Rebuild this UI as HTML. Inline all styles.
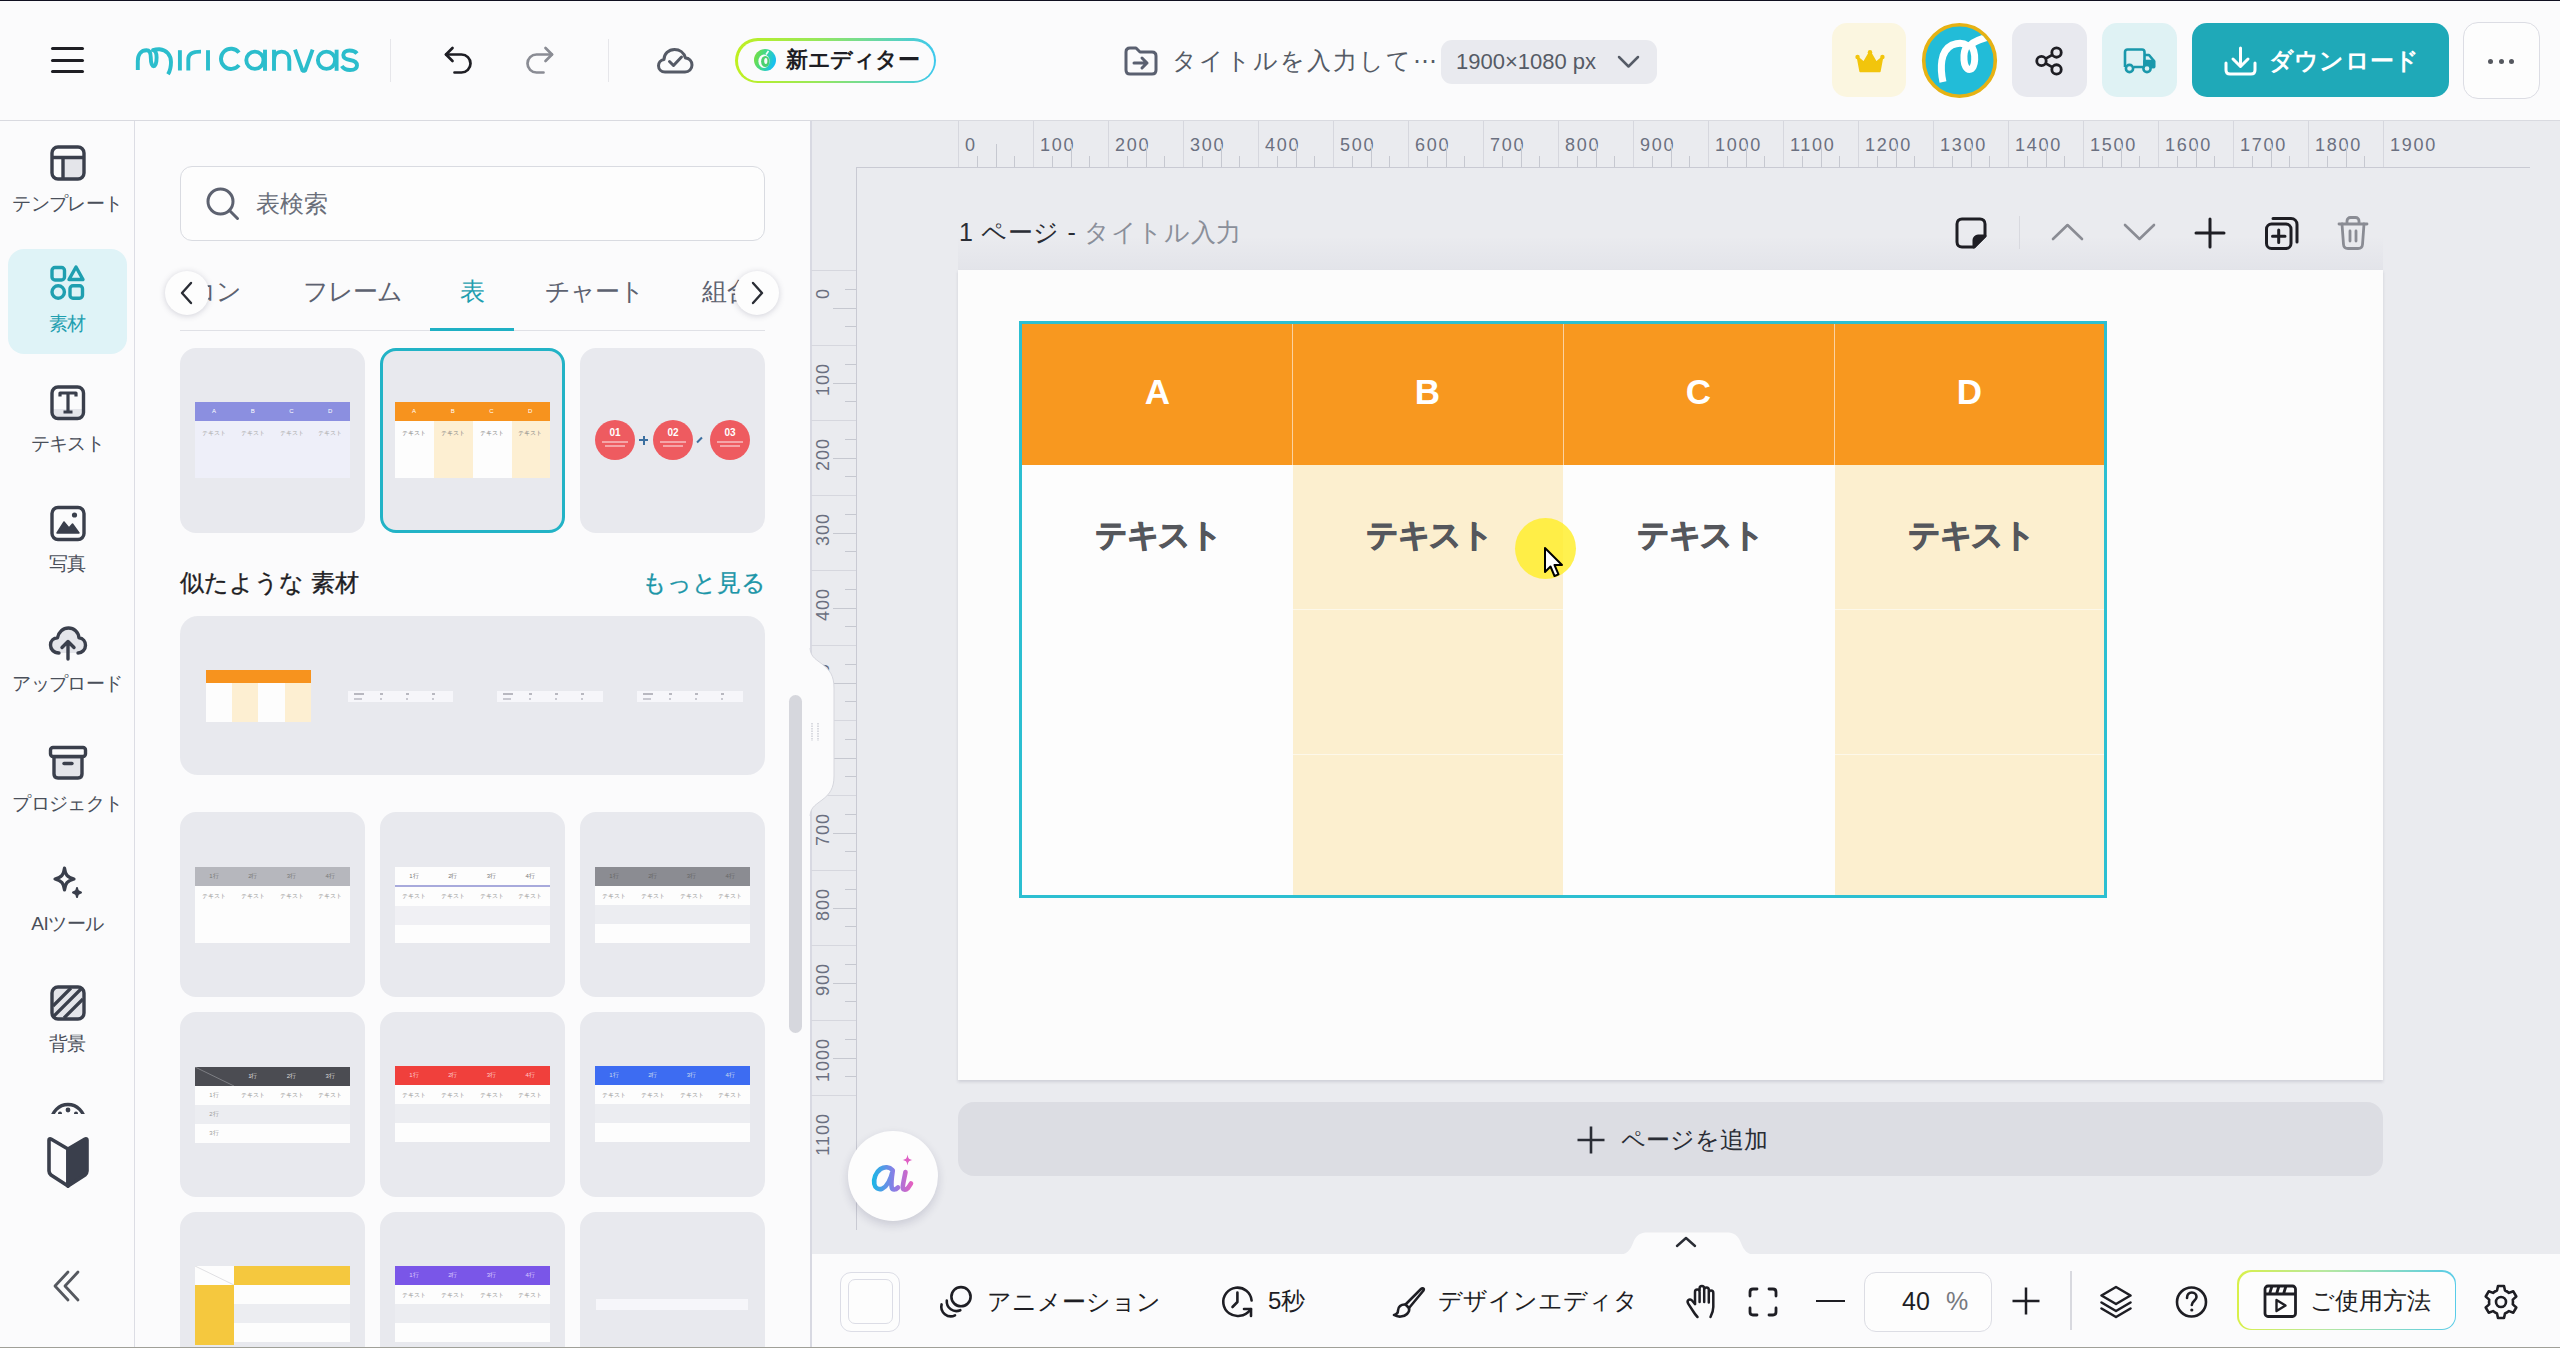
<!DOCTYPE html>
<html><head><meta charset="utf-8">
<style>
*{box-sizing:border-box;margin:0;padding:0}
html,body{width:2560px;height:1348px;overflow:hidden;background:#fbfbfc;font-family:"Liberation Sans",sans-serif;color:#222}
.a{position:absolute}
svg{display:block}
#topline{left:0;top:0;width:2560px;height:1px;background:#101020}
#botline{left:0;top:1347px;width:2560px;height:1px;background:#a0a098}
#header{left:0;top:1px;width:2560px;height:120px;background:#fbfbfc;border-bottom:1px solid #d9dae0}
#rail{left:0;top:121px;width:135px;height:1226px;background:#fbfbfc;border-right:1px solid #dcdde4}
#panel{left:135px;top:121px;width:677px;height:1226px;background:#fbfbfc;border-right:2px solid #d8d9e2}
#canvas{left:812px;top:121px;width:1748px;height:1133px;background:#eaebef}
#bottom{left:812px;top:1254px;width:1748px;height:93px;background:#fbfbfc}
.lbl{font-size:19px;color:#4a4f5a;text-align:center;width:135px;left:0;letter-spacing:-0.6px}
.card{position:absolute;width:185px;height:185px;border-radius:16px;background:#e8e9ee;overflow:hidden}
.rl{font-size:18px;line-height:18px;color:#6b7080;letter-spacing:1.7px;white-space:nowrap}
.th{top:372px;width:271px;text-align:center;font-size:35px;line-height:40px;font-weight:bold;color:#fff}
.td{top:517px;width:271px;text-align:center;font-size:32px;line-height:36px;font-weight:bold;color:#55575c;letter-spacing:-1.2px;-webkit-text-stroke:0.9px #55575c}
.tt{position:absolute;font-size:6px;line-height:7px;width:38px;text-align:center;white-space:nowrap}
</style></head><body>
<div id="topline" class="a"></div>
<div id="header" class="a"></div>

<!-- HEADER CONTENT -->
<div class="a" style="left:51px;top:47px;width:33px;height:3px;background:#1e1e24;border-radius:2px"></div>
<div class="a" style="left:51px;top:59px;width:33px;height:3px;background:#1e1e24;border-radius:2px"></div>
<div class="a" style="left:51px;top:70px;width:33px;height:3px;background:#1e1e24;border-radius:2px"></div>
<svg class="a" style="left:130px;top:40px" width="235" height="40" viewBox="130 40 235 40" fill="none" stroke="#2bbdcc" stroke-width="3.9" stroke-linecap="butt">
 <path d="M137.8 70 V61 C137.8 54 141.5 50.2 146.5 50.2 C150 50.2 150.8 53 150.8 57.5 C150.8 63 152 66.2 153.7 66.2 C155.4 66.2 156.6 63 156.6 57.5 C156.6 53 155.8 50.8 153 50.2 C155.5 49.3 157.5 49.1 159.5 49.2 C166.5 49.8 171 55 171 62 C171 67 170.2 70.8 168 74.3" stroke-linejoin="round" />
 
 <path d="M179.9 50.2 V70.5" />
 <path d="M188.3 70.5 V59 C188.3 54 193 51.6 201 51.6" />
 <path d="M208 50.2 V70.5" />
 <path d="M239 52.6 A10.1 10.1 0 1 0 239 65.1" />
 <circle cx="254.9" cy="60.25" r="8.6" />
 <path d="M265 49.7 V70.8" />
 <path d="M274 70.8 V49.7 M274 60 C274 54.5 277.5 51.6 281.6 51.6 C286 51.6 289.3 54.5 289.3 60 V70.8" />
 <path d="M295 49.7 L302.6 70.8 H305 L312.6 49.7" stroke-linejoin="bevel" />
 <circle cx="326.5" cy="60.25" r="8.6" />
 <path d="M336.6 49.7 V70.8" />
 <path d="M357 53.5 C355 51 352 50.5 349.5 50.5 C345.5 50.5 343.3 52.5 343.3 55 C343.3 58.5 347 59.5 350 60 C354 60.6 357 61.8 357 65.5 C357 68.5 354 70 350 70 C346.5 70 343.5 68.8 341.8 66" />
</svg>
<div class="a" style="left:390px;top:39px;width:1px;height:43px;background:#e6e6ea"></div>
<svg class="a" style="left:440px;top:42px" width="40" height="36" viewBox="0 0 40 36" fill="none" stroke="#1e1e24" stroke-width="2.7" stroke-linecap="round" stroke-linejoin="round">
 <path d="M12.5 6 L6 12.5 L12.5 19" /><path d="M6 12.5 H21.5 C26.5 12.5 30.5 16.5 30.5 21.5 C30.5 26.5 26.5 30.5 21.5 30.5 H14.5" />
</svg>
<svg class="a" style="left:520px;top:42px" width="40" height="36" viewBox="0 0 40 36" fill="none" stroke="#8a8c94" stroke-width="2.7" stroke-linecap="round" stroke-linejoin="round">
 <path d="M25.5 6 L32 12.5 L25.5 19" /><path d="M32 12.5 H16.5 C11.5 12.5 7.5 16.5 7.5 21.5 C7.5 26.5 11.5 30.5 16.5 30.5 H23.5" />
</svg>
<div class="a" style="left:608px;top:39px;width:1px;height:43px;background:#e6e6ea"></div>
<svg class="a" style="left:652px;top:42px" width="46" height="36" viewBox="0 0 46 36" fill="none" stroke="#555a66" stroke-width="3" stroke-linecap="round" stroke-linejoin="round">
 <path d="M13 30 H33 C37 30 40 27 40 23 C40 19 37 16 33.5 16 C32 10.5 27.5 7.5 22.5 7.5 C16.5 7.5 12 12 12 17.5 C8.5 18 6.5 20.8 6.5 23.8 C6.5 27.3 9.3 30 13 30 Z" />
 <path d="M17.5 19.5 L21.5 23.5 L29.5 15" />
</svg>
<div class="a" style="left:735px;top:38px;width:201px;height:45px;border-radius:23px;background:linear-gradient(90deg,#c0f020,#98e858 40%,#3cc8ee)"></div>
<div class="a" style="left:737.5px;top:40.5px;width:196px;height:40px;border-radius:20.5px;background:#fbfbfc"></div>
<svg class="a" style="left:753px;top:48px" width="24" height="24" viewBox="0 0 24 24">
 <defs><linearGradient id="pg" x1="0" y1="0" x2="1" y2="0.3"><stop offset="0" stop-color="#84e030"/><stop offset="0.55" stop-color="#3cd890"/><stop offset="1" stop-color="#18c0f0"/></linearGradient></defs>
 <circle cx="12" cy="12" r="11" fill="url(#pg)"/>
 <ellipse cx="11" cy="13.2" rx="5.6" ry="6.8" fill="#fbfbfc"/>
 <ellipse cx="12.3" cy="13.5" rx="4.2" ry="5.6" fill="#4cd070"/>
 <ellipse cx="12.8" cy="13" rx="1.6" ry="3" fill="#fbfbfc"/>
 <path d="M13 6.5 L15.5 3" stroke="#fbfbfc" stroke-width="1.6"/>
</svg>
<div class="a" style="left:786px;top:46px;font-size:22px;font-weight:bold;color:#1e1e24;letter-spacing:-0.4px;line-height:28px">新エディター</div>

<svg class="a" style="left:1122px;top:44px" width="38" height="34" viewBox="0 0 38 34" fill="none" stroke="#5a6070" stroke-width="3" stroke-linecap="round" stroke-linejoin="round">
 <path d="M4 8 C4 5.5 5.5 4 8 4 H14 L18 8 H30 C32.5 8 34 9.5 34 12 V26 C34 28.5 32.5 30 30 30 H8 C5.5 30 4 28.5 4 26 Z" />
 <path d="M12 19 H25 M20 14 L25 19 L20 24" />
</svg>
<div class="a" style="left:1172px;top:46px;font-size:24px;color:#555b66;letter-spacing:2px;line-height:30px;white-space:nowrap">タイトルを入力して<span style="letter-spacing:-1px">⋯</span></div>
<div class="a" style="left:1441px;top:40px;width:216px;height:44px;border-radius:11px;background:#e9eaef"></div>
<div class="a" style="left:1456px;top:48px;font-size:22px;color:#555b66;line-height:28px;white-space:nowrap">1900×1080 px</div>
<svg class="a" style="left:1614px;top:52px" width="30" height="20" viewBox="0 0 30 20" fill="none" stroke="#555b66" stroke-width="2.5" stroke-linecap="round" stroke-linejoin="round"><path d="M5 5 L14.5 14.5 L24 5"/></svg>

<div class="a" style="left:1832px;top:23px;width:74px;height:74px;border-radius:15px;background:#fbf6e0"></div>
<svg class="a" style="left:1854px;top:48px" width="32" height="27" viewBox="0 0 36 30"><path d="M4 10 L11 16 L18 4 L25 16 L32 10 L29 26 H7 Z" fill="#f2c50c" stroke="#f2c50c" stroke-width="2" stroke-linejoin="round"/><circle cx="18" cy="4.5" r="2.5" fill="#f2c50c"/><circle cx="4" cy="10" r="2.5" fill="#f2c50c"/><circle cx="32" cy="10" r="2.5" fill="#f2c50c"/></svg>
<svg class="a" style="left:1921px;top:22px" width="77" height="77" viewBox="0 0 77 77">
 <circle cx="38.5" cy="38.5" r="35.8" fill="#22bcd8" stroke="#e6b214" stroke-width="3.6"/>
 <defs><clipPath id="avc"><circle cx="38.5" cy="38.5" r="34"/></clipPath></defs><path clip-path="url(#avc)" d="M22 60 C19 46 19 29 31 23 C37 20.5 43 21 46.5 23.5 C41 30 42 47.5 48.5 47.5 C55 47.5 55.5 29.5 49.5 23 C53 19.5 60 16.5 72 14" fill="none" stroke="#fff" stroke-width="7" stroke-linecap="butt" stroke-linejoin="round"/>
</svg>
<div class="a" style="left:2012px;top:23px;width:75px;height:74px;border-radius:15px;background:#e8e9ef"></div>
<svg class="a" style="left:2033px;top:45px" width="32" height="32" viewBox="0 0 34 34" fill="none" stroke="#1e1e24" stroke-width="3"><circle cx="9" cy="17" r="5"/><circle cx="25" cy="8" r="5"/><circle cx="25" cy="26" r="5"/><path d="M13.5 14.5 L20.5 10.5 M13.5 19.5 L20.5 23.5"/></svg>
<div class="a" style="left:2102px;top:23px;width:75px;height:74px;border-radius:15px;background:#dff2f4"></div>
<svg class="a" style="left:2120px;top:46px" width="38" height="30" viewBox="0 0 38 30" fill="none" stroke="#1a98ab" stroke-width="2.6" stroke-linejoin="round">
 <path d="M5 21 V6 C5 4.5 6 3.5 7.5 3.5 H22 C23.5 3.5 24.5 4.5 24.5 6 V21 H14"/>
 <path d="M24.5 9 H29 L34 15 V21 H31"/><path d="M24.5 15 H34 V21 H24.5 Z" fill="#1a98ab"/>
 <circle cx="9.5" cy="22.5" r="3.6" fill="#dff2f4"/><circle cx="27" cy="22.5" r="3.6" fill="#dff2f4"/>
</svg>
<div class="a" style="left:2192px;top:23px;width:257px;height:74px;border-radius:15px;background:#1fa9b8"></div>
<svg class="a" style="left:2222px;top:44px" width="38" height="34" viewBox="0 0 38 34" fill="none" stroke="#fff" stroke-width="3" stroke-linecap="round" stroke-linejoin="round"><path d="M18.5 4 V22 M11 15 L18.5 22.5 L26 15"/><path d="M4 19 V26 C4 28.5 5.5 30 8 30 H29 C31.5 30 33 28.5 33 26 V19"/></svg>
<div class="a" style="left:2269px;top:46px;font-size:24px;color:#fff;font-weight:bold;letter-spacing:0.2px;line-height:30px;white-space:nowrap">ダウンロード</div>
<div class="a" style="left:2463px;top:22px;width:77px;height:77px;border-radius:15px;background:#fdfdfd;border:1px solid #dcdde4"></div>
<div class="a" style="left:2487.5px;top:58.5px;width:5px;height:5px;border-radius:3px;background:#55585f"></div>
<div class="a" style="left:2498.5px;top:58.5px;width:5px;height:5px;border-radius:3px;background:#55585f"></div>
<div class="a" style="left:2508.5px;top:58.5px;width:5px;height:5px;border-radius:3px;background:#55585f"></div>

<div id="rail" class="a"></div>
<div id="panel" class="a"></div>


<!-- PANEL CONTENT -->
<div class="a" style="left:180px;top:166px;width:585px;height:75px;border-radius:12px;border:1px solid #d9dbe1;background:#fdfdfd"></div>
<svg class="a" style="left:203px;top:184px" width="40" height="40" viewBox="0 0 40 40" fill="none" stroke="#5d6270" stroke-width="3" stroke-linecap="round"><circle cx="17.5" cy="17.5" r="12.5"/><path d="M26.5 26.5 L34.5 34.5"/></svg>
<div class="a" style="left:256px;top:190px;font-size:24px;color:#6a6f7a;line-height:28px">表検索</div>

<div class="a" style="left:200px;top:276px;width:560px;height:34px;overflow:hidden">
 <div class="a" style="left:-9px;top:0;font-size:25px;color:#5d6270;line-height:30px;white-space:nowrap;letter-spacing:-1px">コン</div>
 <div class="a" style="left:103px;top:0;font-size:25px;color:#5d6270;line-height:30px;white-space:nowrap;letter-spacing:-1px">フレーム</div>
 <div class="a" style="left:260px;top:0;font-size:25px;color:#1f9fb0;line-height:30px;white-space:nowrap">表</div>
 <div class="a" style="left:345px;top:0;font-size:25px;color:#5d6270;line-height:30px;white-space:nowrap;letter-spacing:-1px">チャート</div>
 <div class="a" style="left:502px;top:0;font-size:25px;color:#5d6270;line-height:30px;white-space:nowrap">組合せ</div>
</div>
<div class="a" style="left:180px;top:330px;width:585px;height:1px;background:#e0e1e6"></div>
<div class="a" style="left:430px;top:328px;width:84px;height:3px;background:#1fb0c4"></div>
<div class="a" style="left:165px;top:271px;width:44px;height:44px;border-radius:22px;background:#fdfdfd;box-shadow:0 1px 6px rgba(60,60,90,0.22)"></div>
<svg class="a" style="left:176px;top:280px" width="22" height="26" viewBox="0 0 22 26" fill="none" stroke="#2a2d35" stroke-width="2.4" stroke-linecap="round" stroke-linejoin="round"><path d="M15 3 L6 13 L15 23"/></svg>
<div class="a" style="left:735px;top:271px;width:44px;height:44px;border-radius:22px;background:#fdfdfd;box-shadow:0 1px 6px rgba(60,60,90,0.22)"></div>
<svg class="a" style="left:746px;top:280px" width="22" height="26" viewBox="0 0 22 26" fill="none" stroke="#2a2d35" stroke-width="2.4" stroke-linecap="round" stroke-linejoin="round"><path d="M7 3 L16 13 L7 23"/></svg>

<!-- row1 -->
<div class="card" style="left:180px;top:348px">
 <div class="a" style="z-index:2;left:0;top:0;width:185px;height:185px"><div class="tt" style="left:15.0px;top:60.0px;color:#fff">A</div>
 <div class="tt" style="left:53.8px;top:60.0px;color:#fff">B</div>
 <div class="tt" style="left:92.5px;top:60.0px;color:#fff">C</div>
 <div class="tt" style="left:131.2px;top:60.0px;color:#fff">D</div>
 <div class="tt" style="left:15.0px;top:81.5px;color:#aaa">テキスト</div>
 <div class="tt" style="left:53.8px;top:81.5px;color:#aaa">テキスト</div>
 <div class="tt" style="left:92.5px;top:81.5px;color:#aaa">テキスト</div>
 <div class="tt" style="left:131.2px;top:81.5px;color:#aaa">テキスト</div></div>
 <div class="a" style="left:15px;top:54px;width:155px;height:19px;background:#8b8fe0"></div>
 <div class="a" style="left:15px;top:73px;width:155px;height:57px;background:#eeeff9"></div>
</div>
<div class="card" style="left:380px;top:348px;border:3px solid #22b3c6">
 <div class="a" style="left:-3px;top:-3px;width:185px;height:185px;z-index:2"><div class="tt" style="left:15.0px;top:60.0px;color:#fff">A</div>
 <div class="tt" style="left:53.8px;top:60.0px;color:#fff">B</div>
 <div class="tt" style="left:92.5px;top:60.0px;color:#fff">C</div>
 <div class="tt" style="left:131.2px;top:60.0px;color:#fff">D</div>
 <div class="tt" style="left:15.0px;top:81.5px;color:#888">テキスト</div>
 <div class="tt" style="left:53.8px;top:81.5px;color:#888">テキスト</div>
 <div class="tt" style="left:92.5px;top:81.5px;color:#888">テキスト</div>
 <div class="tt" style="left:131.2px;top:81.5px;color:#888">テキスト</div></div>
 <div class="a" style="left:12px;top:51px;width:155px;height:19px;background:#f7931e"></div>
 <div class="a" style="left:12px;top:70px;width:39px;height:57px;background:#fdfdfd"></div>
 <div class="a" style="left:51px;top:70px;width:39px;height:57px;background:#fdefd2"></div>
 <div class="a" style="left:90px;top:70px;width:39px;height:57px;background:#fdfdfd"></div>
 <div class="a" style="left:129px;top:70px;width:38px;height:57px;background:#fdefd2"></div>
</div>
<div class="card" style="left:580px;top:348px">
 <div class="a" style="left:15px;top:72px;width:40px;height:40px;border-radius:20px;background:#ee5b60"></div>
 <div class="a" style="left:73px;top:72px;width:40px;height:40px;border-radius:20px;background:#ee5b60"></div>
 <div class="a" style="left:130px;top:72px;width:40px;height:40px;border-radius:20px;background:#ee5b60"></div>
 <div class="a" style="left:15px;top:79px;width:40px;text-align:center;font-size:10px;line-height:11px;color:#fff;font-weight:bold">01</div>
 <div class="a" style="left:73px;top:79px;width:40px;text-align:center;font-size:10px;line-height:11px;color:#fff;font-weight:bold">02</div>
 <div class="a" style="left:130px;top:79px;width:40px;text-align:center;font-size:10px;line-height:11px;color:#fff;font-weight:bold">03</div>
 <div class="a" style="left:22px;top:93px;width:26px;height:1.5px;background:#f5a5a8"></div>
 <div class="a" style="left:25px;top:97px;width:20px;height:1.5px;background:#f5a5a8"></div>
 <div class="a" style="left:80px;top:93px;width:26px;height:1.5px;background:#f5a5a8"></div>
 <div class="a" style="left:83px;top:97px;width:20px;height:1.5px;background:#f5a5a8"></div>
 <div class="a" style="left:137px;top:93px;width:26px;height:1.5px;background:#f5a5a8"></div>
 <div class="a" style="left:140px;top:97px;width:20px;height:1.5px;background:#f5a5a8"></div>
 <div class="a" style="left:59px;top:91px;width:9px;height:2px;background:#3b6fa0"></div>
 <div class="a" style="left:62.5px;top:87.5px;width:2px;height:9px;background:#3b6fa0"></div>
 <div class="a" style="left:116px;top:91px;width:7px;height:2px;background:#3b6fa0;transform:rotate(-45deg)"></div>
</div>

<div class="a" style="left:180px;top:570px;font-size:24px;color:#1e1e24;line-height:26px;white-space:nowrap;-webkit-text-stroke:0.35px #1e1e24">似たような 素材</div>
<div class="a" style="left:642px;top:569px;font-size:24px;color:#1d96a8;line-height:28px;white-space:nowrap;-webkit-text-stroke:0.3px #1d96a8">もっと見る</div>

<div class="a" style="left:180px;top:616px;width:585px;height:159px;border-radius:18px;background:#e8e9ee;overflow:hidden">
 <div class="a" style="left:26px;top:54px;width:105px;height:12.5px;background:#f7931e"></div>
 <div class="a" style="left:26px;top:66.5px;width:26px;height:39.5px;background:#fdfdfd"></div>
 <div class="a" style="left:52px;top:66.5px;width:26px;height:39.5px;background:#fdefd2"></div>
 <div class="a" style="left:78px;top:66.5px;width:27px;height:39.5px;background:#fdfdfd"></div>
 <div class="a" style="left:105px;top:66.5px;width:26px;height:39.5px;background:#fdefd2"></div>
 <div class="a" style="left:168px;top:75px;width:105px;height:11px;background:#f6f6fa"></div><div class="a" style="left:174px;top:77px;width:10px;height:2px;background:#b8b8c0"></div><div class="a" style="left:174px;top:82px;width:8px;height:1.5px;background:#c8c8d0"></div><div class="a" style="left:200px;top:77px;width:3px;height:2px;background:#b8b8c0"></div><div class="a" style="left:200px;top:82px;width:2px;height:1.5px;background:#c8c8d0"></div><div class="a" style="left:226px;top:77px;width:3px;height:2px;background:#b8b8c0"></div><div class="a" style="left:226px;top:82px;width:2px;height:1.5px;background:#c8c8d0"></div><div class="a" style="left:252px;top:77px;width:3px;height:2px;background:#b8b8c0"></div><div class="a" style="left:252px;top:82px;width:2px;height:1.5px;background:#c8c8d0"></div>
 <div class="a" style="left:317px;top:75px;width:106px;height:11px;background:#f6f6fa"></div><div class="a" style="left:323px;top:77px;width:10px;height:2px;background:#b8b8c0"></div><div class="a" style="left:323px;top:82px;width:8px;height:1.5px;background:#c8c8d0"></div><div class="a" style="left:349px;top:77px;width:3px;height:2px;background:#b8b8c0"></div><div class="a" style="left:349px;top:82px;width:2px;height:1.5px;background:#c8c8d0"></div><div class="a" style="left:375px;top:77px;width:3px;height:2px;background:#b8b8c0"></div><div class="a" style="left:375px;top:82px;width:2px;height:1.5px;background:#c8c8d0"></div><div class="a" style="left:401px;top:77px;width:3px;height:2px;background:#b8b8c0"></div><div class="a" style="left:401px;top:82px;width:2px;height:1.5px;background:#c8c8d0"></div>
 <div class="a" style="left:457px;top:75px;width:106px;height:11px;background:#f6f6fa"></div><div class="a" style="left:463px;top:77px;width:10px;height:2px;background:#b8b8c0"></div><div class="a" style="left:463px;top:82px;width:8px;height:1.5px;background:#c8c8d0"></div><div class="a" style="left:489px;top:77px;width:3px;height:2px;background:#b8b8c0"></div><div class="a" style="left:489px;top:82px;width:2px;height:1.5px;background:#c8c8d0"></div><div class="a" style="left:515px;top:77px;width:3px;height:2px;background:#b8b8c0"></div><div class="a" style="left:515px;top:82px;width:2px;height:1.5px;background:#c8c8d0"></div><div class="a" style="left:541px;top:77px;width:3px;height:2px;background:#b8b8c0"></div><div class="a" style="left:541px;top:82px;width:2px;height:1.5px;background:#c8c8d0"></div>
</div>

<!-- row2 -->
<div class="card" style="left:180px;top:812px">
 <div class="a" style="z-index:2;left:0;top:0;width:185px;height:185px"><div class="tt" style="left:15.0px;top:61.0px;color:#777">1行</div>
 <div class="tt" style="left:53.8px;top:61.0px;color:#777">2行</div>
 <div class="tt" style="left:92.5px;top:61.0px;color:#777">3行</div>
 <div class="tt" style="left:131.2px;top:61.0px;color:#777">4行</div>
 <div class="tt" style="left:15.0px;top:80.5px;color:#999">テキスト</div>
 <div class="tt" style="left:53.8px;top:80.5px;color:#999">テキスト</div>
 <div class="tt" style="left:92.5px;top:80.5px;color:#999">テキスト</div>
 <div class="tt" style="left:131.2px;top:80.5px;color:#999">テキスト</div></div>
 <div class="a" style="left:15px;top:55px;width:155px;height:19px;background:#b6b7bd"></div>
 <div class="a" style="left:15px;top:74px;width:155px;height:57px;background:#fdfdfd"></div>
</div>
<div class="card" style="left:380px;top:812px">
 <div class="a" style="z-index:2;left:0;top:0;width:185px;height:185px"><div class="tt" style="left:15.0px;top:61.0px;color:#777">1行</div>
 <div class="tt" style="left:53.8px;top:61.0px;color:#777">2行</div>
 <div class="tt" style="left:92.5px;top:61.0px;color:#777">3行</div>
 <div class="tt" style="left:131.2px;top:61.0px;color:#777">4行</div>
 <div class="tt" style="left:15.0px;top:80.5px;color:#999">テキスト</div>
 <div class="tt" style="left:53.8px;top:80.5px;color:#999">テキスト</div>
 <div class="tt" style="left:92.5px;top:80.5px;color:#999">テキスト</div>
 <div class="tt" style="left:131.2px;top:80.5px;color:#999">テキスト</div></div>
 <div class="a" style="left:15px;top:55px;width:155px;height:19px;background:#fdfdfd"></div>
 <div class="a" style="left:15px;top:73px;width:155px;height:2px;background:#a8aadc"></div>
 <div class="a" style="left:15px;top:75px;width:155px;height:19px;background:#fdfdfd"></div>
 <div class="a" style="left:15px;top:94px;width:155px;height:19px;background:#f0f0f4"></div>
 <div class="a" style="left:15px;top:113px;width:155px;height:18px;background:#fdfdfd"></div>
</div>
<div class="card" style="left:580px;top:812px">
 <div class="a" style="z-index:2;left:0;top:0;width:185px;height:185px"><div class="tt" style="left:15.0px;top:61.0px;color:#666">1行</div>
 <div class="tt" style="left:53.8px;top:61.0px;color:#666">2行</div>
 <div class="tt" style="left:92.5px;top:61.0px;color:#666">3行</div>
 <div class="tt" style="left:131.2px;top:61.0px;color:#666">4行</div>
 <div class="tt" style="left:15.0px;top:80.5px;color:#999">テキスト</div>
 <div class="tt" style="left:53.8px;top:80.5px;color:#999">テキスト</div>
 <div class="tt" style="left:92.5px;top:80.5px;color:#999">テキスト</div>
 <div class="tt" style="left:131.2px;top:80.5px;color:#999">テキスト</div></div>
 <div class="a" style="left:15px;top:55px;width:155px;height:19px;background:#8b8c92"></div>
 <div class="a" style="left:15px;top:74px;width:155px;height:19px;background:#fdfdfd"></div>
 <div class="a" style="left:15px;top:93px;width:155px;height:19px;background:#ecedf1"></div>
 <div class="a" style="left:15px;top:112px;width:155px;height:19px;background:#fdfdfd"></div>
</div>
<!-- row3 -->
<div class="card" style="left:180px;top:1012px">
 <div class="a" style="z-index:2;left:0;top:0;width:185px;height:185px"><div class="tt" style="left:15.0px;top:60.5px;color:#ddd"></div>
 <div class="tt" style="left:53.8px;top:60.5px;color:#ddd">1行</div>
 <div class="tt" style="left:92.5px;top:60.5px;color:#ddd">2行</div>
 <div class="tt" style="left:131.2px;top:60.5px;color:#ddd">3行</div>
 <div class="tt" style="left:15.0px;top:80.0px;color:#999">1行</div>
 <div class="tt" style="left:53.8px;top:80.0px;color:#999">テキスト</div>
 <div class="tt" style="left:92.5px;top:80.0px;color:#999">テキスト</div>
 <div class="tt" style="left:131.2px;top:80.0px;color:#999">テキスト</div>
 <div class="tt" style="left:15.0px;top:99.0px;color:#999">2行</div>
 <div class="tt" style="left:53.8px;top:99.0px;color:#999"></div>
 <div class="tt" style="left:92.5px;top:99.0px;color:#999"></div>
 <div class="tt" style="left:131.2px;top:99.0px;color:#999"></div>
 <div class="tt" style="left:15.0px;top:118.0px;color:#999">3行</div>
 <div class="tt" style="left:53.8px;top:118.0px;color:#999"></div>
 <div class="tt" style="left:92.5px;top:118.0px;color:#999"></div>
 <div class="tt" style="left:131.2px;top:118.0px;color:#999"></div></div>
 <div class="a" style="left:15px;top:55px;width:155px;height:19px;background:#4b4c52"></div>
 <svg class="a" style="left:15px;top:55px" width="39" height="19"><path d="M0 0 L39 19" stroke="#8a8b90" stroke-width="0.8"/></svg>
 <div class="a" style="left:15px;top:74px;width:155px;height:19px;background:#fdfdfd"></div>
 <div class="a" style="left:15px;top:93px;width:155px;height:19px;background:#ecedf1"></div>
 <div class="a" style="left:15px;top:112px;width:155px;height:19px;background:#fdfdfd"></div>
</div>
<div class="card" style="left:380px;top:1012px">
 <div class="a" style="z-index:2;left:0;top:0;width:185px;height:185px"><div class="tt" style="left:15.0px;top:60.0px;color:#fcc">1行</div>
 <div class="tt" style="left:53.8px;top:60.0px;color:#fcc">2行</div>
 <div class="tt" style="left:92.5px;top:60.0px;color:#fcc">3行</div>
 <div class="tt" style="left:131.2px;top:60.0px;color:#fcc">4行</div>
 <div class="tt" style="left:15.0px;top:79.5px;color:#999">テキスト</div>
 <div class="tt" style="left:53.8px;top:79.5px;color:#999">テキスト</div>
 <div class="tt" style="left:92.5px;top:79.5px;color:#999">テキスト</div>
 <div class="tt" style="left:131.2px;top:79.5px;color:#999">テキスト</div></div>
 <div class="a" style="left:15px;top:54px;width:155px;height:19px;background:#f0403c"></div>
 <div class="a" style="left:15px;top:73px;width:155px;height:19px;background:#fdfdfd"></div>
 <div class="a" style="left:15px;top:92px;width:155px;height:19px;background:#ecedf1"></div>
 <div class="a" style="left:15px;top:111px;width:155px;height:19px;background:#fdfdfd"></div>
</div>
<div class="card" style="left:580px;top:1012px">
 <div class="a" style="z-index:2;left:0;top:0;width:185px;height:185px"><div class="tt" style="left:15.0px;top:60.0px;color:#cde">1行</div>
 <div class="tt" style="left:53.8px;top:60.0px;color:#cde">2行</div>
 <div class="tt" style="left:92.5px;top:60.0px;color:#cde">3行</div>
 <div class="tt" style="left:131.2px;top:60.0px;color:#cde">4行</div>
 <div class="tt" style="left:15.0px;top:79.5px;color:#999">テキスト</div>
 <div class="tt" style="left:53.8px;top:79.5px;color:#999">テキスト</div>
 <div class="tt" style="left:92.5px;top:79.5px;color:#999">テキスト</div>
 <div class="tt" style="left:131.2px;top:79.5px;color:#999">テキスト</div></div>
 <div class="a" style="left:15px;top:54px;width:155px;height:19px;background:#3d6cf2"></div>
 <div class="a" style="left:15px;top:73px;width:155px;height:19px;background:#fdfdfd"></div>
 <div class="a" style="left:15px;top:92px;width:155px;height:19px;background:#ecedf1"></div>
 <div class="a" style="left:15px;top:111px;width:155px;height:19px;background:#fdfdfd"></div>
</div>
<!-- row4 -->
<div class="card" style="left:180px;top:1212px">
 <div class="a" style="left:15px;top:54px;width:39px;height:19px;background:#fdfdfd"></div>
 <svg class="a" style="left:15px;top:54px" width="39" height="19"><path d="M0 0 L39 19" stroke="#d8d8dc" stroke-width="0.8"/></svg>
 <div class="a" style="left:54px;top:54px;width:116px;height:19px;background:#f5c83e"></div>
 <div class="a" style="left:15px;top:73px;width:39px;height:60px;background:#f5c83e"></div>
 <div class="a" style="left:54px;top:73px;width:116px;height:19px;background:#fdfdfd"></div>
 <div class="a" style="left:54px;top:92px;width:116px;height:19px;background:#ecedf1"></div>
 <div class="a" style="left:54px;top:111px;width:116px;height:19px;background:#fdfdfd"></div>
</div>
<div class="card" style="left:380px;top:1212px">
 <div class="a" style="z-index:2;left:0;top:0;width:185px;height:185px"><div class="tt" style="left:15.0px;top:60.0px;color:#dcf">1行</div>
 <div class="tt" style="left:53.8px;top:60.0px;color:#dcf">2行</div>
 <div class="tt" style="left:92.5px;top:60.0px;color:#dcf">3行</div>
 <div class="tt" style="left:131.2px;top:60.0px;color:#dcf">4行</div>
 <div class="tt" style="left:15.0px;top:79.5px;color:#999">テキスト</div>
 <div class="tt" style="left:53.8px;top:79.5px;color:#999">テキスト</div>
 <div class="tt" style="left:92.5px;top:79.5px;color:#999">テキスト</div>
 <div class="tt" style="left:131.2px;top:79.5px;color:#999">テキスト</div></div>
 <div class="a" style="left:15px;top:54px;width:155px;height:19px;background:#7a56e8"></div>
 <div class="a" style="left:15px;top:73px;width:155px;height:19px;background:#fdfdfd"></div>
 <div class="a" style="left:15px;top:92px;width:155px;height:19px;background:#ecedf1"></div>
 <div class="a" style="left:15px;top:111px;width:155px;height:19px;background:#fdfdfd"></div>
</div>
<div class="card" style="left:580px;top:1212px">
 <div class="a" style="left:16px;top:87px;width:152px;height:11px;background:#f6f6fa"></div>
</div>
<div class="a" style="left:789px;top:695px;width:13px;height:338px;border-radius:7px;background:#d6d7dd"></div>

<!-- RAIL CONTENT -->
<div class="a" style="left:8px;top:249px;width:119px;height:105px;border-radius:16px;background:#dff3f7"></div>
<svg class="a" style="left:47px;top:142px" width="42" height="42" viewBox="0 0 42 42" fill="none" stroke="#3a3f4c" stroke-width="3.4" stroke-linejoin="round">
 <path d="M16 15.5 H36.5 V33 C36.5 35 35 36.5 33 36.5 H16 Z" fill="#e4e5ea" stroke="none"/>
 <rect x="5" y="5" width="32" height="32" rx="6"/><path d="M5 15.5 H37 M16 15.5 V37"/>
</svg>
<div class="a lbl" style="top:192px;line-height:24px">テンプレート</div>
<svg class="a" style="left:47px;top:262px" width="42" height="42" viewBox="0 0 42 42" fill="none" stroke="#1f9fb0" stroke-width="3.4" stroke-linejoin="round">
 <rect x="5" y="5.5" width="12.5" height="12.5" rx="3"/><path d="M29 5 L36 17.5 H22 Z"/><circle cx="11.2" cy="30" r="6.2"/><rect x="23" y="23.8" width="12.5" height="12.5" rx="3"/>
</svg>
<div class="a lbl" style="top:312px;line-height:24px;color:#1f9fb0">素材</div>
<svg class="a" style="left:47px;top:382px" width="42" height="42" viewBox="0 0 42 42" fill="none" stroke="#3a3f4c" stroke-width="3.4" stroke-linejoin="round">
 <path d="M6 27 H36 V32 C36 34.5 34.5 36 32 36 H10 C7.5 36 6 34.5 6 32 Z" fill="#e4e5ea" stroke="none"/>
 <rect x="5" y="5" width="31.5" height="31.5" rx="6"/>
 <path d="M13 14.5 V11 H29 V14.5 M21 11 V30 M16.5 30 H25.5" stroke-width="3.2"/>
</svg>
<div class="a lbl" style="top:432px;line-height:24px">テキスト</div>
<svg class="a" style="left:47px;top:502px" width="42" height="42" viewBox="0 0 42 42" fill="none" stroke="#3a3f4c" stroke-width="3.4" stroke-linejoin="round">
 <rect x="5" y="5.5" width="32" height="32" rx="6"/>
 <path d="M10 31 L17 20 L22 26 L25.5 22 L32 31 Z" fill="#3a3f4c" stroke-width="1.5"/><circle cx="27.5" cy="13" r="2.6" fill="#3a3f4c" stroke="none"/>
</svg>
<div class="a lbl" style="top:552px;line-height:24px">写真</div>
<svg class="a" style="left:47px;top:622px" width="42" height="42" viewBox="0 0 42 42" fill="none" stroke="#3a3f4c" stroke-width="3.4" stroke-linecap="round" stroke-linejoin="round">
 <path d="M12 31 C6.5 31 3.5 27 3.5 23 C3.5 19 6.5 16 10.5 15.8 C11.5 10 16 6 21.5 6 C27 6 31.5 10 32 15.8 C36 16.2 38.5 19.5 38.5 23.2 C38.5 27.5 35 31 31 31" fill="#e4e5ea"/>
 <path d="M21 37 V20 M15 25.5 L21 19.5 L27 25.5"/>
</svg>
<div class="a lbl" style="top:672px;line-height:24px">アップロード</div>
<svg class="a" style="left:47px;top:742px" width="42" height="42" viewBox="0 0 42 42" fill="none" stroke="#3a3f4c" stroke-width="3.4" stroke-linejoin="round">
 <path d="M7 14.5 H35 V32 C35 34.5 33.5 36 31 36 H11 C8.5 36 7 34.5 7 32 Z" fill="#e4e5ea"/>
 <rect x="3.5" y="5.5" width="35" height="9" rx="2.5" fill="#fbfbfc"/><path d="M17 21.5 H25" stroke-linecap="round"/>
</svg>
<div class="a lbl" style="top:792px;line-height:24px">プロジェクト</div>
<svg class="a" style="left:47px;top:862px" width="42" height="42" viewBox="0 0 42 42" fill="none" stroke="#3a3f4c" stroke-width="3.2" stroke-linejoin="round">
 <path d="M17.5 6 C18.5 13 20 15 27 17 C20 19 18.5 21 17.5 28 C16.5 21 15 19 8 17 C15 15 16.5 13 17.5 6 Z"/>
 <path d="M30 26 C30.5 29 31 29.5 34 30.5 C31 31.5 30.5 32 30 35 C29.5 32 29 31.5 26 30.5 C29 29.5 29.5 29 30 26 Z" fill="#3a3f4c" stroke-width="2"/>
</svg>
<div class="a lbl" style="top:912px;line-height:24px;letter-spacing:-0.5px">AIツール</div>
<svg class="a" style="left:47px;top:982px" width="42" height="42" viewBox="0 0 42 42" fill="none" stroke="#3a3f4c" stroke-width="3.4" stroke-linejoin="round">
 <rect x="5" y="5" width="32" height="32" rx="6" fill="#e4e5ea"/>
 <path d="M6 24 L24 6 M6 35 L35 6 M17 36 L36 17" stroke-width="3.2"/>
</svg>
<div class="a lbl" style="top:1032px;line-height:24px">背景</div>
<div class="a" style="left:0;top:1100px;width:134px;height:14px;overflow:hidden">
<svg class="a" style="left:47px;top:0px" width="42" height="42" viewBox="0 0 42 42" fill="none" stroke="#3a3f4c" stroke-width="3.4"><circle cx="21" cy="21" r="16.5"/><circle cx="21" cy="10" r="2.4" fill="#3a3f4c" stroke="none"/><circle cx="13" cy="13.5" r="2" fill="#3a3f4c" stroke="none"/><circle cx="29" cy="13.5" r="2" fill="#3a3f4c" stroke="none"/></svg>
</div>
<svg class="a" style="left:44px;top:1133px" width="48" height="58" viewBox="0 0 48 58" fill="none" stroke="#3a3f4c" stroke-width="3.6" stroke-linejoin="round">
 <path d="M24 16 L41 6 C42 5.5 43 6 43 7 V38 C43 40 42 41 41 42 L24 53 Z" fill="#3a3f4c"/>
 <path d="M24 16 L7 6 C6 5.5 5 6 5 7 V38 C5 40 6 41 7 42 L24 53 Z"/>
</svg>
<svg class="a" style="left:50px;top:1268px" width="34" height="36" viewBox="0 0 34 36" fill="none" stroke="#55585f" stroke-width="2.8" stroke-linecap="round" stroke-linejoin="round"><path d="M18 4 L5 18 L18 32 M28 4 L15 18 L28 32"/></svg>

<div id="canvas" class="a"></div>
<!-- RULERS -->
<div class="a" style="left:856px;top:167px;width:1674px;height:1px;background:#c9cad3"></div>
<div class="a" style="left:856px;top:167px;width:1px;height:1063px;background:#c9cad3"></div>
<div class="a" style="left:958px;top:121px;width:1px;height:46px;background:#d6d7de"></div>
<div class="a rl" style="left:965px;top:136px">0</div>
<div class="a" style="left:976.75px;top:156px;width:1px;height:11px;background:#c6c8d0"></div>
<div class="a" style="left:995.50px;top:144px;width:1px;height:23px;background:#c6c8d0"></div>
<div class="a" style="left:1014.25px;top:156px;width:1px;height:11px;background:#c6c8d0"></div>
<div class="a" style="left:1033px;top:121px;width:1px;height:46px;background:#d6d7de"></div>
<div class="a rl" style="left:1040px;top:136px">100</div>
<div class="a" style="left:1051.75px;top:156px;width:1px;height:11px;background:#c6c8d0"></div>
<div class="a" style="left:1070.50px;top:144px;width:1px;height:23px;background:#c6c8d0"></div>
<div class="a" style="left:1089.25px;top:156px;width:1px;height:11px;background:#c6c8d0"></div>
<div class="a" style="left:1108px;top:121px;width:1px;height:46px;background:#d6d7de"></div>
<div class="a rl" style="left:1115px;top:136px">200</div>
<div class="a" style="left:1126.75px;top:156px;width:1px;height:11px;background:#c6c8d0"></div>
<div class="a" style="left:1145.50px;top:144px;width:1px;height:23px;background:#c6c8d0"></div>
<div class="a" style="left:1164.25px;top:156px;width:1px;height:11px;background:#c6c8d0"></div>
<div class="a" style="left:1183px;top:121px;width:1px;height:46px;background:#d6d7de"></div>
<div class="a rl" style="left:1190px;top:136px">300</div>
<div class="a" style="left:1201.75px;top:156px;width:1px;height:11px;background:#c6c8d0"></div>
<div class="a" style="left:1220.50px;top:144px;width:1px;height:23px;background:#c6c8d0"></div>
<div class="a" style="left:1239.25px;top:156px;width:1px;height:11px;background:#c6c8d0"></div>
<div class="a" style="left:1258px;top:121px;width:1px;height:46px;background:#d6d7de"></div>
<div class="a rl" style="left:1265px;top:136px">400</div>
<div class="a" style="left:1276.75px;top:156px;width:1px;height:11px;background:#c6c8d0"></div>
<div class="a" style="left:1295.50px;top:144px;width:1px;height:23px;background:#c6c8d0"></div>
<div class="a" style="left:1314.25px;top:156px;width:1px;height:11px;background:#c6c8d0"></div>
<div class="a" style="left:1333px;top:121px;width:1px;height:46px;background:#d6d7de"></div>
<div class="a rl" style="left:1340px;top:136px">500</div>
<div class="a" style="left:1351.75px;top:156px;width:1px;height:11px;background:#c6c8d0"></div>
<div class="a" style="left:1370.50px;top:144px;width:1px;height:23px;background:#c6c8d0"></div>
<div class="a" style="left:1389.25px;top:156px;width:1px;height:11px;background:#c6c8d0"></div>
<div class="a" style="left:1408px;top:121px;width:1px;height:46px;background:#d6d7de"></div>
<div class="a rl" style="left:1415px;top:136px">600</div>
<div class="a" style="left:1426.75px;top:156px;width:1px;height:11px;background:#c6c8d0"></div>
<div class="a" style="left:1445.50px;top:144px;width:1px;height:23px;background:#c6c8d0"></div>
<div class="a" style="left:1464.25px;top:156px;width:1px;height:11px;background:#c6c8d0"></div>
<div class="a" style="left:1483px;top:121px;width:1px;height:46px;background:#d6d7de"></div>
<div class="a rl" style="left:1490px;top:136px">700</div>
<div class="a" style="left:1501.75px;top:156px;width:1px;height:11px;background:#c6c8d0"></div>
<div class="a" style="left:1520.50px;top:144px;width:1px;height:23px;background:#c6c8d0"></div>
<div class="a" style="left:1539.25px;top:156px;width:1px;height:11px;background:#c6c8d0"></div>
<div class="a" style="left:1558px;top:121px;width:1px;height:46px;background:#d6d7de"></div>
<div class="a rl" style="left:1565px;top:136px">800</div>
<div class="a" style="left:1576.75px;top:156px;width:1px;height:11px;background:#c6c8d0"></div>
<div class="a" style="left:1595.50px;top:144px;width:1px;height:23px;background:#c6c8d0"></div>
<div class="a" style="left:1614.25px;top:156px;width:1px;height:11px;background:#c6c8d0"></div>
<div class="a" style="left:1633px;top:121px;width:1px;height:46px;background:#d6d7de"></div>
<div class="a rl" style="left:1640px;top:136px">900</div>
<div class="a" style="left:1651.75px;top:156px;width:1px;height:11px;background:#c6c8d0"></div>
<div class="a" style="left:1670.50px;top:144px;width:1px;height:23px;background:#c6c8d0"></div>
<div class="a" style="left:1689.25px;top:156px;width:1px;height:11px;background:#c6c8d0"></div>
<div class="a" style="left:1708px;top:121px;width:1px;height:46px;background:#d6d7de"></div>
<div class="a rl" style="left:1715px;top:136px">1000</div>
<div class="a" style="left:1726.75px;top:156px;width:1px;height:11px;background:#c6c8d0"></div>
<div class="a" style="left:1745.50px;top:144px;width:1px;height:23px;background:#c6c8d0"></div>
<div class="a" style="left:1764.25px;top:156px;width:1px;height:11px;background:#c6c8d0"></div>
<div class="a" style="left:1783px;top:121px;width:1px;height:46px;background:#d6d7de"></div>
<div class="a rl" style="left:1790px;top:136px">1100</div>
<div class="a" style="left:1801.75px;top:156px;width:1px;height:11px;background:#c6c8d0"></div>
<div class="a" style="left:1820.50px;top:144px;width:1px;height:23px;background:#c6c8d0"></div>
<div class="a" style="left:1839.25px;top:156px;width:1px;height:11px;background:#c6c8d0"></div>
<div class="a" style="left:1858px;top:121px;width:1px;height:46px;background:#d6d7de"></div>
<div class="a rl" style="left:1865px;top:136px">1200</div>
<div class="a" style="left:1876.75px;top:156px;width:1px;height:11px;background:#c6c8d0"></div>
<div class="a" style="left:1895.50px;top:144px;width:1px;height:23px;background:#c6c8d0"></div>
<div class="a" style="left:1914.25px;top:156px;width:1px;height:11px;background:#c6c8d0"></div>
<div class="a" style="left:1933px;top:121px;width:1px;height:46px;background:#d6d7de"></div>
<div class="a rl" style="left:1940px;top:136px">1300</div>
<div class="a" style="left:1951.75px;top:156px;width:1px;height:11px;background:#c6c8d0"></div>
<div class="a" style="left:1970.50px;top:144px;width:1px;height:23px;background:#c6c8d0"></div>
<div class="a" style="left:1989.25px;top:156px;width:1px;height:11px;background:#c6c8d0"></div>
<div class="a" style="left:2008px;top:121px;width:1px;height:46px;background:#d6d7de"></div>
<div class="a rl" style="left:2015px;top:136px">1400</div>
<div class="a" style="left:2026.75px;top:156px;width:1px;height:11px;background:#c6c8d0"></div>
<div class="a" style="left:2045.50px;top:144px;width:1px;height:23px;background:#c6c8d0"></div>
<div class="a" style="left:2064.25px;top:156px;width:1px;height:11px;background:#c6c8d0"></div>
<div class="a" style="left:2083px;top:121px;width:1px;height:46px;background:#d6d7de"></div>
<div class="a rl" style="left:2090px;top:136px">1500</div>
<div class="a" style="left:2101.75px;top:156px;width:1px;height:11px;background:#c6c8d0"></div>
<div class="a" style="left:2120.50px;top:144px;width:1px;height:23px;background:#c6c8d0"></div>
<div class="a" style="left:2139.25px;top:156px;width:1px;height:11px;background:#c6c8d0"></div>
<div class="a" style="left:2158px;top:121px;width:1px;height:46px;background:#d6d7de"></div>
<div class="a rl" style="left:2165px;top:136px">1600</div>
<div class="a" style="left:2176.75px;top:156px;width:1px;height:11px;background:#c6c8d0"></div>
<div class="a" style="left:2195.50px;top:144px;width:1px;height:23px;background:#c6c8d0"></div>
<div class="a" style="left:2214.25px;top:156px;width:1px;height:11px;background:#c6c8d0"></div>
<div class="a" style="left:2233px;top:121px;width:1px;height:46px;background:#d6d7de"></div>
<div class="a rl" style="left:2240px;top:136px">1700</div>
<div class="a" style="left:2251.75px;top:156px;width:1px;height:11px;background:#c6c8d0"></div>
<div class="a" style="left:2270.50px;top:144px;width:1px;height:23px;background:#c6c8d0"></div>
<div class="a" style="left:2289.25px;top:156px;width:1px;height:11px;background:#c6c8d0"></div>
<div class="a" style="left:2308px;top:121px;width:1px;height:46px;background:#d6d7de"></div>
<div class="a rl" style="left:2315px;top:136px">1800</div>
<div class="a" style="left:2326.75px;top:156px;width:1px;height:11px;background:#c6c8d0"></div>
<div class="a" style="left:2345.50px;top:144px;width:1px;height:23px;background:#c6c8d0"></div>
<div class="a" style="left:2364.25px;top:156px;width:1px;height:11px;background:#c6c8d0"></div>
<div class="a" style="left:2383px;top:121px;width:1px;height:46px;background:#d6d7de"></div>
<div class="a rl" style="left:2390px;top:136px">1900</div>
<div class="a" style="left:811px;top:270px;width:45px;height:1px;background:#d6d7de"></div>
<div class="a rl" style="left:814px;top:288px;transform-origin:0 0;transform:rotate(-90deg) translate(-100%,0);width:auto;letter-spacing:1px"><span>0</span></div>
<div class="a" style="left:845px;top:288.75px;width:11px;height:1px;background:#c6c8d0"></div>
<div class="a" style="left:833px;top:307.50px;width:23px;height:1px;background:#c6c8d0"></div>
<div class="a" style="left:845px;top:326.25px;width:11px;height:1px;background:#c6c8d0"></div>
<div class="a" style="left:811px;top:345px;width:45px;height:1px;background:#d6d7de"></div>
<div class="a rl" style="left:814px;top:363px;transform-origin:0 0;transform:rotate(-90deg) translate(-100%,0);width:auto;letter-spacing:1px"><span>100</span></div>
<div class="a" style="left:845px;top:363.75px;width:11px;height:1px;background:#c6c8d0"></div>
<div class="a" style="left:833px;top:382.50px;width:23px;height:1px;background:#c6c8d0"></div>
<div class="a" style="left:845px;top:401.25px;width:11px;height:1px;background:#c6c8d0"></div>
<div class="a" style="left:811px;top:420px;width:45px;height:1px;background:#d6d7de"></div>
<div class="a rl" style="left:814px;top:438px;transform-origin:0 0;transform:rotate(-90deg) translate(-100%,0);width:auto;letter-spacing:1px"><span>200</span></div>
<div class="a" style="left:845px;top:438.75px;width:11px;height:1px;background:#c6c8d0"></div>
<div class="a" style="left:833px;top:457.50px;width:23px;height:1px;background:#c6c8d0"></div>
<div class="a" style="left:845px;top:476.25px;width:11px;height:1px;background:#c6c8d0"></div>
<div class="a" style="left:811px;top:495px;width:45px;height:1px;background:#d6d7de"></div>
<div class="a rl" style="left:814px;top:513px;transform-origin:0 0;transform:rotate(-90deg) translate(-100%,0);width:auto;letter-spacing:1px"><span>300</span></div>
<div class="a" style="left:845px;top:513.75px;width:11px;height:1px;background:#c6c8d0"></div>
<div class="a" style="left:833px;top:532.50px;width:23px;height:1px;background:#c6c8d0"></div>
<div class="a" style="left:845px;top:551.25px;width:11px;height:1px;background:#c6c8d0"></div>
<div class="a" style="left:811px;top:570px;width:45px;height:1px;background:#d6d7de"></div>
<div class="a rl" style="left:814px;top:588px;transform-origin:0 0;transform:rotate(-90deg) translate(-100%,0);width:auto;letter-spacing:1px"><span>400</span></div>
<div class="a" style="left:845px;top:588.75px;width:11px;height:1px;background:#c6c8d0"></div>
<div class="a" style="left:833px;top:607.50px;width:23px;height:1px;background:#c6c8d0"></div>
<div class="a" style="left:845px;top:626.25px;width:11px;height:1px;background:#c6c8d0"></div>
<div class="a" style="left:811px;top:645px;width:45px;height:1px;background:#d6d7de"></div>
<div class="a rl" style="left:814px;top:663px;transform-origin:0 0;transform:rotate(-90deg) translate(-100%,0);width:auto;letter-spacing:1px"><span>500</span></div>
<div class="a" style="left:845px;top:663.75px;width:11px;height:1px;background:#c6c8d0"></div>
<div class="a" style="left:833px;top:682.50px;width:23px;height:1px;background:#c6c8d0"></div>
<div class="a" style="left:845px;top:701.25px;width:11px;height:1px;background:#c6c8d0"></div>
<div class="a" style="left:811px;top:720px;width:45px;height:1px;background:#d6d7de"></div>
<div class="a rl" style="left:814px;top:738px;transform-origin:0 0;transform:rotate(-90deg) translate(-100%,0);width:auto;letter-spacing:1px"><span>600</span></div>
<div class="a" style="left:845px;top:738.75px;width:11px;height:1px;background:#c6c8d0"></div>
<div class="a" style="left:833px;top:757.50px;width:23px;height:1px;background:#c6c8d0"></div>
<div class="a" style="left:845px;top:776.25px;width:11px;height:1px;background:#c6c8d0"></div>
<div class="a" style="left:811px;top:795px;width:45px;height:1px;background:#d6d7de"></div>
<div class="a rl" style="left:814px;top:813px;transform-origin:0 0;transform:rotate(-90deg) translate(-100%,0);width:auto;letter-spacing:1px"><span>700</span></div>
<div class="a" style="left:845px;top:813.75px;width:11px;height:1px;background:#c6c8d0"></div>
<div class="a" style="left:833px;top:832.50px;width:23px;height:1px;background:#c6c8d0"></div>
<div class="a" style="left:845px;top:851.25px;width:11px;height:1px;background:#c6c8d0"></div>
<div class="a" style="left:811px;top:870px;width:45px;height:1px;background:#d6d7de"></div>
<div class="a rl" style="left:814px;top:888px;transform-origin:0 0;transform:rotate(-90deg) translate(-100%,0);width:auto;letter-spacing:1px"><span>800</span></div>
<div class="a" style="left:845px;top:888.75px;width:11px;height:1px;background:#c6c8d0"></div>
<div class="a" style="left:833px;top:907.50px;width:23px;height:1px;background:#c6c8d0"></div>
<div class="a" style="left:845px;top:926.25px;width:11px;height:1px;background:#c6c8d0"></div>
<div class="a" style="left:811px;top:945px;width:45px;height:1px;background:#d6d7de"></div>
<div class="a rl" style="left:814px;top:963px;transform-origin:0 0;transform:rotate(-90deg) translate(-100%,0);width:auto;letter-spacing:1px"><span>900</span></div>
<div class="a" style="left:845px;top:963.75px;width:11px;height:1px;background:#c6c8d0"></div>
<div class="a" style="left:833px;top:982.50px;width:23px;height:1px;background:#c6c8d0"></div>
<div class="a" style="left:845px;top:1001.25px;width:11px;height:1px;background:#c6c8d0"></div>
<div class="a" style="left:811px;top:1020px;width:45px;height:1px;background:#d6d7de"></div>
<div class="a rl" style="left:814px;top:1038px;transform-origin:0 0;transform:rotate(-90deg) translate(-100%,0);width:auto;letter-spacing:1px"><span>1000</span></div>
<div class="a" style="left:845px;top:1038.75px;width:11px;height:1px;background:#c6c8d0"></div>
<div class="a" style="left:833px;top:1057.50px;width:23px;height:1px;background:#c6c8d0"></div>
<div class="a" style="left:845px;top:1076.25px;width:11px;height:1px;background:#c6c8d0"></div>
<div class="a" style="left:811px;top:1095px;width:45px;height:1px;background:#d6d7de"></div>
<div class="a rl" style="left:814px;top:1113px;transform-origin:0 0;transform:rotate(-90deg) translate(-100%,0);width:auto;letter-spacing:1px"><span>1100</span></div>
<!-- /RULERS -->

<!-- PAGE -->
<div class="a" style="left:958px;top:270px;width:1425px;height:810px;background:#fcfcfc;box-shadow:0 2px 3px rgba(40,40,80,0.14)"></div>
<div class="a" style="left:958px;top:236px;width:1425px;height:34px;background:linear-gradient(180deg,rgba(70,70,110,0) 0%,rgba(70,70,110,0.045) 100%)"></div>
<div class="a" style="left:959px;top:217px;font-size:25px;line-height:30px;color:#2a2d35;white-space:nowrap;letter-spacing:0.6px">1 ページ - <span style="color:#8a8f9a;letter-spacing:0.7px">タイトル入力</span></div>
<svg class="a" style="left:1952px;top:214px" width="38" height="38" viewBox="0 0 38 38" fill="none" stroke="#1e1e24" stroke-width="3" stroke-linejoin="round"><path d="M10 5 H28 C31 5 33 7 33 10 V22 L22 33 H10 C7 33 5 31 5 28 V10 C5 7 7 5 10 5 Z"/><path d="M33 22 H26 C24 22 22 24 22 26 V33 Z" fill="#1e1e24"/></svg>
<div class="a" style="left:2019px;top:216px;width:1px;height:33px;background:#d8d9df"></div>
<svg class="a" style="left:2048px;top:216px" width="40" height="30" viewBox="0 0 40 30" fill="none" stroke="#8a8c94" stroke-width="2.6" stroke-linecap="round" stroke-linejoin="round"><path d="M5 23 L19.5 9 L34 23"/></svg>
<svg class="a" style="left:2120px;top:216px" width="40" height="30" viewBox="0 0 40 30" fill="none" stroke="#8a8c94" stroke-width="2.6" stroke-linecap="round" stroke-linejoin="round"><path d="M5 9 L19.5 23 L34 9"/></svg>
<svg class="a" style="left:2191px;top:214px" width="38" height="38" viewBox="0 0 38 38" fill="none" stroke="#1e1e24" stroke-width="3" stroke-linecap="round"><path d="M19 5 V33 M5 19 H33"/></svg>
<svg class="a" style="left:2262px;top:213px" width="40" height="40" viewBox="0 0 40 40" fill="none" stroke="#1e1e24" stroke-width="3" stroke-linejoin="round" stroke-linecap="round"><rect x="4.5" y="11" width="24.5" height="24.5" rx="5"/><path d="M11 5.5 H29 C32.5 5.5 35 8 35 11.5 V29"/><path d="M16.7 17 V29.5 M10.5 23.2 H23"/></svg>
<svg class="a" style="left:2334px;top:213px" width="38" height="40" viewBox="0 0 38 40" fill="none" stroke="#8a8c94" stroke-width="2.8" stroke-linejoin="round" stroke-linecap="round"><path d="M5 11 H33 M13 11 V8 C13 6 14.5 4.5 16.5 4.5 H21.5 C23.5 4.5 25 6 25 8 V11"/><path d="M8 11 L9.5 31.5 C9.7 34 11.5 35.5 14 35.5 H24 C26.5 35.5 28.3 34 28.5 31.5 L30 11"/><path d="M16 18 V28 M22 18 V28"/></svg>

<!-- TABLE -->
<div class="a" style="left:1019px;top:321px;width:1088px;height:577px;border:3px solid #2cbfd1;background:#fdfdfd"></div>
<div class="a" style="left:1022px;top:324px;width:1082px;height:141px;background:#f8981f"></div>
<div class="a" style="left:1292px;top:324px;width:1px;height:141px;background:#fbd2a0"></div>
<div class="a" style="left:1563px;top:324px;width:1px;height:141px;background:#fbd2a0"></div>
<div class="a" style="left:1834px;top:324px;width:1px;height:141px;background:#fbd2a0"></div>
<div class="a" style="left:1293px;top:465px;width:270px;height:430px;background:#fcefcf"></div>
<div class="a" style="left:1835px;top:465px;width:269px;height:430px;background:#fcefcf"></div>
<div class="a" style="left:1293px;top:609px;width:270px;height:1px;background:#fdf8ea"></div>
<div class="a" style="left:1293px;top:754px;width:270px;height:1px;background:#fdf8ea"></div>
<div class="a" style="left:1835px;top:609px;width:269px;height:1px;background:#fdf8ea"></div>
<div class="a" style="left:1835px;top:754px;width:269px;height:1px;background:#fdf8ea"></div>
<div class="a th" style="left:1022px">A</div>
<div class="a th" style="left:1292px">B</div>
<div class="a th" style="left:1563px">C</div>
<div class="a th" style="left:1834px">D</div>
<div class="a td" style="left:1023px">テキスト</div>
<div class="a td" style="left:1294px">テキスト</div>
<div class="a td" style="left:1565px">テキスト</div>
<div class="a td" style="left:1836px">テキスト</div>
<!-- cursor -->
<div class="a" style="left:1515px;top:518px;width:61px;height:61px;border-radius:31px;background:rgba(255,238,40,0.82)"></div>
<svg class="a" style="left:1541px;top:545px" width="28" height="36" viewBox="0 0 28 36"><path d="M4 3 L4 27 L9.5 21.5 L13.5 31 L17.5 29.3 L13.5 20 L21 20 Z" fill="#fff" stroke="#000" stroke-width="2" stroke-linejoin="round"/></svg>

<!-- ADD PAGE -->
<div class="a" style="left:958px;top:1102px;width:1425px;height:74px;border-radius:16px;background:#dcdde3"></div>
<svg class="a" style="left:1572px;top:1122px" width="38" height="36" viewBox="0 0 38 36" fill="none" stroke="#2a2d35" stroke-width="2.6"><path d="M19 4.5 V31.5 M5.5 18 H32.5"/></svg>
<div class="a" style="left:1621px;top:1126px;font-size:24px;line-height:28px;color:#2a2d35;white-space:nowrap">ページを追加</div>

<!-- AI BUTTON -->
<div class="a" style="left:848px;top:1131px;width:90px;height:90px;border-radius:45px;background:#fdfdfd;box-shadow:0 4px 10px rgba(40,40,80,0.16)"></div>
<svg class="a" style="left:860px;top:1143px" width="66" height="66" viewBox="0 0 66 66">
 <defs><linearGradient id="aig" gradientUnits="userSpaceOnUse" x1="12" y1="0" x2="52" y2="0"><stop offset="0" stop-color="#18b8e6"/><stop offset="0.55" stop-color="#8a7ee6"/><stop offset="1" stop-color="#e460c0"/></linearGradient></defs>
 <path d="M32.5 27 C29.5 23.8 24.5 23.5 20.5 26 C15.5 29.5 13.5 36 14.3 41 C15 45 18.5 47 22 45.8 C26.5 44 30.5 37 32.8 27.5 C31.8 34 30.8 41 31.8 44.8 C32.6 47.2 35.5 47 38 44.5" fill="none" stroke="url(#aig)" stroke-width="4.6" stroke-linecap="round" stroke-linejoin="round"/>
 <path d="M45.5 29 C44.5 34.5 43 40 42.8 43.8 C42.6 47 45.5 47.5 48 45 L51 40.5" fill="none" stroke="url(#aig)" stroke-width="4.6" stroke-linecap="round" stroke-linejoin="round"/>
 <path d="M47.5 11.5 C48.2 15.5 48.8 16.2 52.5 17 C48.8 17.8 48.2 18.5 47.5 22.5 C46.8 18.5 46.2 17.8 42.5 17 C46.2 16.2 46.8 15.5 47.5 11.5 Z" fill="#df5fc4"/>
</svg>

<!-- PANEL HANDLE -->
<svg class="a" style="left:808px;top:648px" width="32" height="168" viewBox="0 0 32 168"><path d="M0 -2 H2 C2 8 6 10 14 16 C22 22 26 28 26 40 V128 C26 140 22 146 14 152 C6 158 2 160 2 170 H0 Z" fill="#fbfbfc"/><path d="M2 -2 C2 8 6 10 14 16 C22 22 26 28 26 40 V128 C26 140 22 146 14 152 C6 158 2 160 2 170" fill="none" stroke="#d6d7de" stroke-width="1"/><path d="M4 75 V93 M10 75 V93" stroke="#d0d1d8" stroke-width="1.5" stroke-dasharray="1.5 1"/></svg>

<div id="bottom" class="a"></div>

<!-- BOTTOM TOOLBAR -->
<svg class="a" style="left:1618px;top:1231px" width="138" height="24" viewBox="0 0 138 24"><path d="M0 24 C8 24 12 20 15 12 C18 4 22 1.5 30 1.5 H108 C116 1.5 120 4 123 12 C126 20 130 24 138 24 Z" fill="#fbfbfc"/><path d="M59 15 L68 7 L77 15" fill="none" stroke="#2a2d35" stroke-width="2.4" stroke-linecap="round" stroke-linejoin="round"/></svg>
<div class="a" style="left:840px;top:1272px;width:60px;height:60px;border-radius:11px;border:1px solid #dcdde6;background:#fdfdfd"></div>
<div class="a" style="left:848px;top:1279px;width:45px;height:45px;border-radius:7px;border:1px solid #dcdde6;background:#fdfdfd"></div>
<svg class="a" style="left:936px;top:1282px" width="40" height="40" viewBox="0 0 40 40" fill="none" stroke="#1e1e24" stroke-width="2.6" stroke-linecap="round"><circle cx="25" cy="14.7" r="9.6"/><path d="M10.8 18.6 A9.6 9.6 0 0 0 24.3 28.2"/><path d="M5.6 22.4 A9.6 9.6 0 0 0 19 33.4"/></svg>
<div class="a" style="left:987px;top:1288px;font-size:24px;line-height:28px;color:#1e1e24;white-space:nowrap">アニメーション</div>
<svg class="a" style="left:1218px;top:1283px" width="40" height="40" viewBox="0 0 40 40" fill="none" stroke="#1e1e24" stroke-width="2.6" stroke-linecap="round" stroke-linejoin="round"><path d="M33.6 17.5 A14.2 14.2 0 1 0 21.9 32.8 C26 32.5 30 30 33 26"/><path d="M19.4 9.5 V19 L14.5 24"/><path d="M26 26 H33 V33"/></svg>
<div class="a" style="left:1268px;top:1287px;font-size:24px;line-height:28px;color:#1e1e24;white-space:nowrap">5秒</div>
<svg class="a" style="left:1389px;top:1282px" width="40" height="38" viewBox="0 0 40 38" fill="none" stroke="#1e1e24" stroke-width="2.6" stroke-linecap="round" stroke-linejoin="round"><path d="M32 7 C33.5 5.5 35.5 6.5 34.5 8.5 L20 26 L16.5 22.5 Z"/><path d="M16.5 22.5 C12 22 9 25 9 28.5 C9 31 7.5 32.5 5 33 C9 35.5 15 35 18 32 C20 30 20.5 27.5 20 26"/></svg>
<div class="a" style="left:1438px;top:1287px;font-size:24px;line-height:28px;color:#1e1e24;white-space:nowrap">デザインエディタ</div>
<svg class="a" style="left:1684px;top:1283px" width="36" height="38" viewBox="0 0 36 38" fill="none" stroke="#1e1e24" stroke-width="2.5" stroke-linecap="round" stroke-linejoin="round"><path d="M11 21 V9 C11 7.5 12 6.5 13.3 6.5 C14.6 6.5 15.6 7.5 15.6 9 V19 M15.6 8 V5.5 C15.6 4 16.6 3 17.9 3 C19.2 3 20.2 4 20.2 5.5 V19 M20.2 7 C20.2 5.5 21.2 4.5 22.5 4.5 C23.8 4.5 24.8 5.5 24.8 7 V19.5 M24.8 10 C24.8 8.5 25.8 7.5 27 7.5 C28.3 7.5 29.3 8.5 29.3 10 V24 C29.3 28 28 31 26.5 34"/><path d="M11 21 L8 17.5 C7 16.3 5.3 16.2 4.3 17.2 C3.4 18.1 3.5 19.5 4.2 20.6 L9 28 C10.5 30.5 12 32.5 13.5 34"/></svg>
<svg class="a" style="left:1745px;top:1284px" width="36" height="36" viewBox="0 0 36 36" fill="none" stroke="#1e1e24" stroke-width="2.8" stroke-linecap="round" stroke-linejoin="round"><path d="M5 12 V8 C5 6 6 5 8 5 H12 M24 5 H28 C30 5 31 6 31 8 V12 M31 24 V28 C31 30 30 31 28 31 H24 M12 31 H8 C6 31 5 30 5 28 V24"/></svg>
<div class="a" style="left:1816px;top:1299.5px;width:29px;height:2.5px;background:#1e1e24"></div>
<div class="a" style="left:1864px;top:1272px;width:128px;height:60px;border-radius:12px;border:1px solid #dcdde4;background:#fdfdfd"></div>
<div class="a" style="left:1902px;top:1287px;font-size:25px;line-height:28px;color:#1e1e24;white-space:nowrap">40</div>
<div class="a" style="left:1946px;top:1287px;font-size:25px;line-height:28px;color:#77797f;white-space:nowrap">%</div>
<svg class="a" style="left:2008px;top:1283px" width="36" height="36" viewBox="0 0 36 36" fill="none" stroke="#1e1e24" stroke-width="2.5"><path d="M18 4.5 V31.5 M4.5 18 H31.5"/></svg>
<div class="a" style="left:2070px;top:1271px;width:2px;height:59px;background:#d8d9df"></div>
<svg class="a" style="left:2096px;top:1282px" width="40" height="40" viewBox="0 0 40 40" fill="none" stroke="#1e1e24" stroke-width="2.6" stroke-linejoin="round" stroke-linecap="round"><path d="M20 5 L34.5 13.5 L20 22 L5.5 13.5 Z"/><path d="M5.5 20.5 L20 29 L34.5 20.5"/><path d="M5.5 26.5 L20 35 L34.5 26.5"/></svg>
<svg class="a" style="left:2172px;top:1282px" width="40" height="40" viewBox="0 0 40 40" fill="none" stroke="#1e1e24" stroke-width="2.6" stroke-linecap="round"><circle cx="19.5" cy="20" r="14.5"/><path d="M15 16 C15 12.5 17 10.5 19.8 10.5 C22.8 10.5 24.5 12.5 24.5 15 C24.5 18.5 19.8 19 19.8 23"/><circle cx="19.8" cy="28" r="1.6" fill="#1e1e24" stroke="none"/></svg>
<div class="a" style="left:2237px;top:1270px;width:219px;height:60px;border-radius:14px;background:linear-gradient(90deg,#d8f04a,#b8e8a0 40%,#58cce8)"></div>
<div class="a" style="left:2238.5px;top:1271.5px;width:216px;height:57px;border-radius:13px;background:#fdfdfd"></div>
<svg class="a" style="left:2260px;top:1281px" width="40" height="40" viewBox="0 0 40 40" fill="none" stroke="#1e1e24" stroke-width="2.8" stroke-linejoin="round"><rect x="5" y="5" width="30.5" height="30.5" rx="3"/><path d="M5 13 H35.5 M12 5 L9.5 13 M19 5 L16.5 13 M26 5 L23.5 13"/><path d="M16.5 19 L25.5 24.5 L16.5 30 Z" stroke-width="2.4"/></svg>
<div class="a" style="left:2310px;top:1287px;font-size:24px;line-height:28px;color:#1e1e24;white-space:nowrap">ご使用方法</div>
<svg class="a" style="left:2480px;top:1281px" width="42" height="42" viewBox="0 0 42 42" fill="none" stroke="#1e1e24" stroke-width="2.6" stroke-linejoin="round"><path d="M18 5 H24 L25 9.5 C26.5 10.1 27.8 10.9 29 11.9 L33.3 10.3 L36.3 15.5 L32.8 18.6 C33 20.2 33 21.8 32.8 23.4 L36.3 26.5 L33.3 31.7 L29 30.1 C27.8 31.1 26.5 31.9 25 32.5 L24 37 H18 L17 32.5 C15.5 31.9 14.2 31.1 13 30.1 L8.7 31.7 L5.7 26.5 L9.2 23.4 C9 21.8 9 20.2 9.2 18.6 L5.7 15.5 L8.7 10.3 L13 11.9 C14.2 10.9 15.5 10.1 17 9.5 Z"/><circle cx="21" cy="21" r="5"/></svg>

<div id="botline" class="a"></div>
</body></html>
